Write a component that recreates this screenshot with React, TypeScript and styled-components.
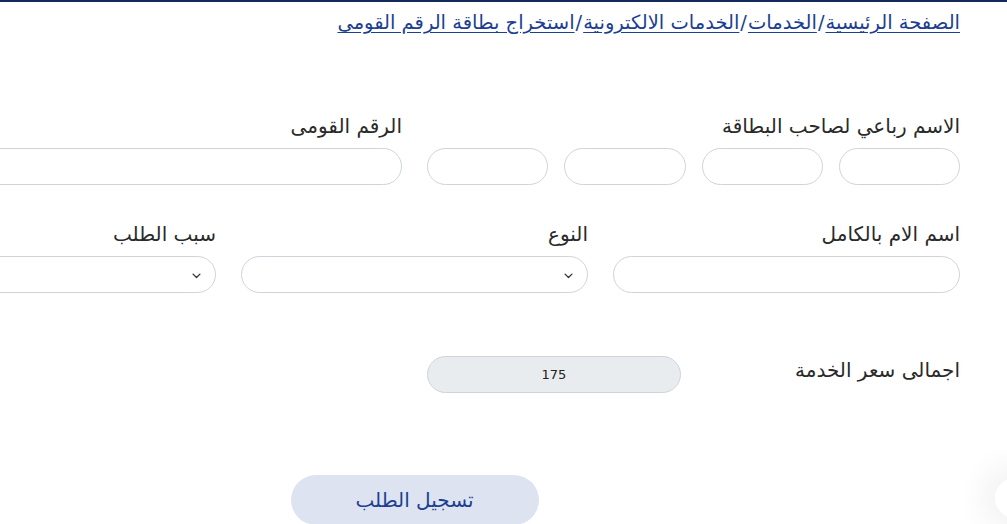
import React from "react";
import styled, { createGlobalStyle } from "styled-components";

const ARABIC_FONT = `"DejaVu Sans", "Noto Sans", sans-serif`;

const GlobalStyle = createGlobalStyle`
  html, body {
    margin: 0;
    padding: 0;
    background: #fff;
    overflow: hidden;
  }
  body {
    direction: rtl;
    font-family: ${ARABIC_FONT};
    color: #2a2a2a;
  }
`;

const TopLine = styled.div`
  height: 2px;
  background: #12295a;
`;

const Container = styled.div`
  width: 1091px;
  margin-right: 47px;
`;

const Breadcrumb = styled.nav`
  padding-top: 8px;
  font-size: 19.5px;
  line-height: 26px;
  color: #1d3f91;
`;

const Crumb = styled.a`
  color: #1d3f91;
  text-decoration: underline;
  text-underline-offset: 3px;
`;

const Sep = styled.span`
  margin: 0 1px;
`;

const Row = styled.div<{ $cols: number; $top: number; $align?: string }>`
  display: grid;
  grid-template-columns: repeat(${(p) => p.$cols}, minmax(0, 1fr));
  column-gap: 25px;
  margin-top: ${(p) => p.$top}px;
  align-items: ${(p) => p.$align || "start"};
`;

const Field = styled.div`
  display: flex;
  flex-direction: column;
`;

const Label = styled.label`
  font-size: 20px;
  line-height: 26px;
  margin-bottom: 9px;
  color: #2a2a2a;
`;

const NameGroup = styled.div`
  display: grid;
  grid-template-columns: repeat(4, minmax(0, 1fr));
  gap: 16px;
`;

const Input = styled.input<{ $readonly?: boolean }>`
  box-sizing: border-box;
  width: 100%;
  height: 37px;
  border: 1px solid #cfd4dc;
  border-radius: 20px;
  background: ${(p) => (p.$readonly ? "#e9ecef" : "#fff")};
  font-family: ${ARABIC_FONT};
  font-size: 13px;
  color: #222;
  text-align: center;
  outline: none;
`;

const SelectBox = styled.div`
  box-sizing: border-box;
  position: relative;
  height: 37px;
  border: 1px solid #cfd4dc;
  border-radius: 20px;
  background: #fff;
`;

const Chevron = styled.svg`
  position: absolute;
  right: 13px;
  top: 13px;
`;

const Actions = styled.div`
  display: flex;
  justify-content: center;
  margin-top: 82px;
`;

const SubmitButton = styled.button`
  width: 248px;
  height: 50px;
  border: none;
  border-radius: 25px;
  background: #dde3f0;
  color: #1d3f91;
  font-family: ${ARABIC_FONT};
  font-size: 20px;
`;

const ChatBubble = styled.div`
  position: fixed;
  right: -28px;
  bottom: 6px;
  width: 40px;
  height: 40px;
  border-radius: 50%;
  background: #fff;
  box-shadow: 0 0 30px 14px rgba(0, 0, 0, 0.05);
  display: flex;
  align-items: center;
  padding-left: 9px;
  box-sizing: border-box;
`;

const Dot = styled.span`
  width: 5px;
  height: 8px;
  border-radius: 3px;
  background: #e01ee0;
`;

const SelectField = ({ label }: { label: string }) => (
  <Field>
    <Label>{label}</Label>
    <SelectBox>
      <Chevron width="11" height="11" viewBox="0 0 16 16">
        <path d="M3 6l5 5 5-5" fill="none" stroke="#343a40" strokeWidth="2" strokeLinecap="round" strokeLinejoin="round" />
      </Chevron>
    </SelectBox>
  </Field>
);

export default function App() {
  return (
    <>
      <GlobalStyle />
      <TopLine />
      <Container>
        <Breadcrumb>
          <Crumb>الصفحة الرئيسية</Crumb>
          <Sep>/</Sep>
          <Crumb>الخدمات</Crumb>
          <Sep>/</Sep>
          <Crumb>الخدمات الالكترونية</Crumb>
          <Sep>/</Sep>
          <Crumb>استخراج بطاقة الرقم القومى</Crumb>
        </Breadcrumb>

        <Row $cols={2} $top={77}>
          <Field>
            <Label>الاسم رباعي لصاحب البطاقة</Label>
            <NameGroup>
              <Input />
              <Input />
              <Input />
              <Input />
            </NameGroup>
          </Field>
          <Field>
            <Label>الرقم القومى</Label>
            <Input />
          </Field>
        </Row>

        <Row $cols={3} $top={36}>
          <Field>
            <Label>اسم الام بالكامل</Label>
            <Input />
          </Field>
          <SelectField label="النوع" />
          <SelectField label="سبب الطلب" />
        </Row>

        <Row $cols={4} $top={63} $align="center">
          <Label as="div">اجمالى سعر الخدمة</Label>
          <Input $readonly readOnly value="175" />
        </Row>

        <Actions>
          <SubmitButton>تسجيل الطلب</SubmitButton>
        </Actions>
      </Container>
      <ChatBubble>
        <Dot />
      </ChatBubble>
    </>
  );
}
